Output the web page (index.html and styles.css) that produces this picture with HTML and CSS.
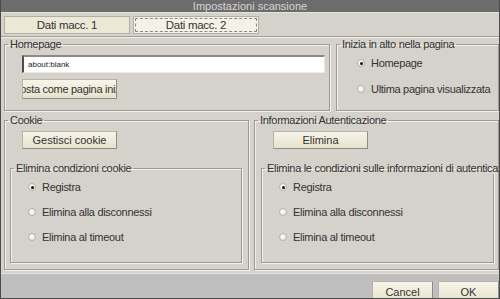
FILE: index.html
```html
<!DOCTYPE html>
<html lang="it">
<head>
  <meta charset="UTF-8">
  <meta name="viewport" content="width=device-width, initial-scale=1.0">
  <title>Impostazioni scansione</title>
  <link rel="stylesheet" href="styles.css">
</head>
<body>
  <div class="window">
    <div class="titlebar">Impostazioni scansione</div>

    <div class="tabs">
      <div class="tab">Dati macc. 1</div>
      <div class="tab active"><span>Dati macc. 2</span></div>
    </div>

    <div class="content">
      <div class="row row-top">
        <fieldset class="group">
          <legend>Homepage</legend>
          <div class="group-body home">
            <input class="url" type="text" value="about:blank">
            <div class="btn btn-clip"><span>Imposta come pagina iniziale</span></div>
          </div>
        </fieldset>

        <fieldset class="group">
          <legend>Inizia in alto nella pagina</legend>
          <div class="group-body start">
            <div class="radio on"><i></i>Homepage</div>
            <div class="radio"><i></i>Ultima pagina visualizzata</div>
          </div>
        </fieldset>
      </div>

      <div class="row row-bottom">
        <fieldset class="group">
          <legend>Cookie</legend>
          <div class="group-body split cookie">
            <div class="btn">Gestisci cookie</div>
            <fieldset class="group inner">
              <legend>Elimina condizioni cookie</legend>
              <div class="group-body options">
                <div class="radio on"><i></i>Registra</div>
                <div class="radio"><i></i>Elimina alla disconnessi</div>
                <div class="radio"><i></i>Elimina al timeout</div>
              </div>
            </fieldset>
          </div>
        </fieldset>

        <fieldset class="group">
          <legend>Informazioni Autenticazione</legend>
          <div class="group-body split auth">
            <div class="btn">Elimina</div>
            <fieldset class="group inner">
              <legend>Elimina le condizioni sulle informazioni di autenticazione</legend>
              <div class="group-body options">
                <div class="radio on"><i></i>Registra</div>
                <div class="radio"><i></i>Elimina alla disconnessi</div>
                <div class="radio"><i></i>Elimina al timeout</div>
              </div>
            </fieldset>
          </div>
        </fieldset>
      </div>
    </div>

    <div class="footer">
      <div class="btn btn-foot">Cancel</div>
      <div class="btn btn-foot">OK</div>
    </div>
  </div>
</body>
</html>
```

FILE: styles.css
```css
* {
  box-sizing: border-box;
}
body {
  margin: 0;
  font-family: 'Liberation Sans', Arial, sans-serif;
  font-size: 11px;
  letter-spacing: -0.3px;
  color: #333;
  background: #4a4a4a;
}
.window {
  width: 500px;
  height: 299px;
  border: 1px solid #4a4a4a;
  border-top: none;
  background: #d5d2cb;
  display: flex;
  flex-direction: column;
  overflow: hidden;
}
.titlebar {
  height: 13px;
  line-height: 12px;
  background: #6c6c6c;
  border-bottom: 1px solid #e6e4de;
  color: #d4d4d4;
  text-align: center;
  letter-spacing: 0;
}
.tabs {
  display: flex;
  gap: 3px;
  padding: 3px 0 2px 3px;
  border-bottom: 1px solid #a09e98;
  box-shadow: 0 1px 0 #f2f0ea;
}
.tab {
  width: 126px;
  height: 18px;
  line-height: 16px;
  text-align: center;
  font-size: 11.5px;
  background: #ebe8d6;
  border: 1px solid #b2afa2;
}
.tab.active {
  background: #f4f2e8;
  padding: 1px;
}
.tab.active span {
  display: block;
  height: 14px;
  line-height: 13px;
  border: 1px dashed #8a8880;
}
.content {
  display: flex;
  flex-direction: column;
  gap: 3px;
  padding: 1px 0 0 3px;
}
.row {
  display: grid;
}
.row-top {
  grid-template-columns: 326px 163px;
  gap: 6px;
}
.row-bottom {
  grid-template-columns: 245px 245px;
  gap: 5px;
}
.group {
  margin: 0;
  padding: 0;
  min-width: 0;
  border: 1px solid #9c9a94;
  box-shadow: inset 1px 1px 0 #f3f1eb, 1px 1px 0 #f3f1eb;
}
.group legend {
  margin-left: 3px;
  padding: 0 2px;
  line-height: 12px;
  white-space: nowrap;
}
.home {
  display: flex;
  flex-direction: column;
  align-items: flex-start;
  gap: 6px;
  padding: 5px 4px 10px 17px;
}
.url {
  width: 100%;
  height: 18px;
  margin: 0;
  padding: 0 4px;
  font-family: 'Liberation Sans', Arial, sans-serif;
  font-size: 8px;
  letter-spacing: 0;
  color: #222;
  background: #fff;
  border: 1px solid #eceae4;
  border-top: 2px solid #8c8a84;
  border-left: 2px solid #4c4c4c;
  outline: none;
}
.btn {
  display: flex;
  align-items: center;
  justify-content: center;
  width: 95px;
  height: 18px;
  letter-spacing: 0;
  white-space: nowrap;
  background: linear-gradient(#f7f5e9, #e6e2cc);
  border: 1px solid #b8b5a6;
  border-right-color: #8e8c84;
  border-bottom-color: #8e8c84;
}
.btn-clip {
  height: 20px;
  overflow: hidden;
  letter-spacing: -0.3px;
}
.start {
  display: flex;
  flex-direction: column;
  gap: 12px;
  padding: 6px 0 14px 20px;
}
.radio {
  display: flex;
  align-items: center;
  gap: 6px;
  height: 14px;
  white-space: nowrap;
}
.radio i {
  flex: none;
  width: 8px;
  height: 8px;
  border-radius: 50%;
  border: 1px solid #b4b4b0;
  background: radial-gradient(circle at 40% 40%, #ffffff, #dcdcd8);
  display: flex;
  align-items: center;
  justify-content: center;
}
.radio.on i::after {
  content: "";
  width: 3px;
  height: 3px;
  border-radius: 50%;
  background: #111;
}
.split {
  display: flex;
  flex-direction: column;
  align-items: flex-start;
  gap: 13px;
  padding: 5px 6px 6px 5px;
}
.split .btn {
  margin-left: 12px;
}
.auth {
  padding: 5px 4px 6px 6px;
}
.inner {
  width: 100%;
}
.options {
  display: flex;
  flex-direction: column;
  gap: 11px;
  padding: 6px 0 18px 17px;
}
.footer {
  flex: 1;
  margin-top: 3px;
  display: flex;
  justify-content: flex-end;
  align-items: flex-start;
  gap: 5px;
  padding-top: 7px;
  background: #bfbfbf;
  border-top: 1px solid #e4e2dc;
}
.btn-foot {
  width: 61px;
  height: 22px;
}
```
